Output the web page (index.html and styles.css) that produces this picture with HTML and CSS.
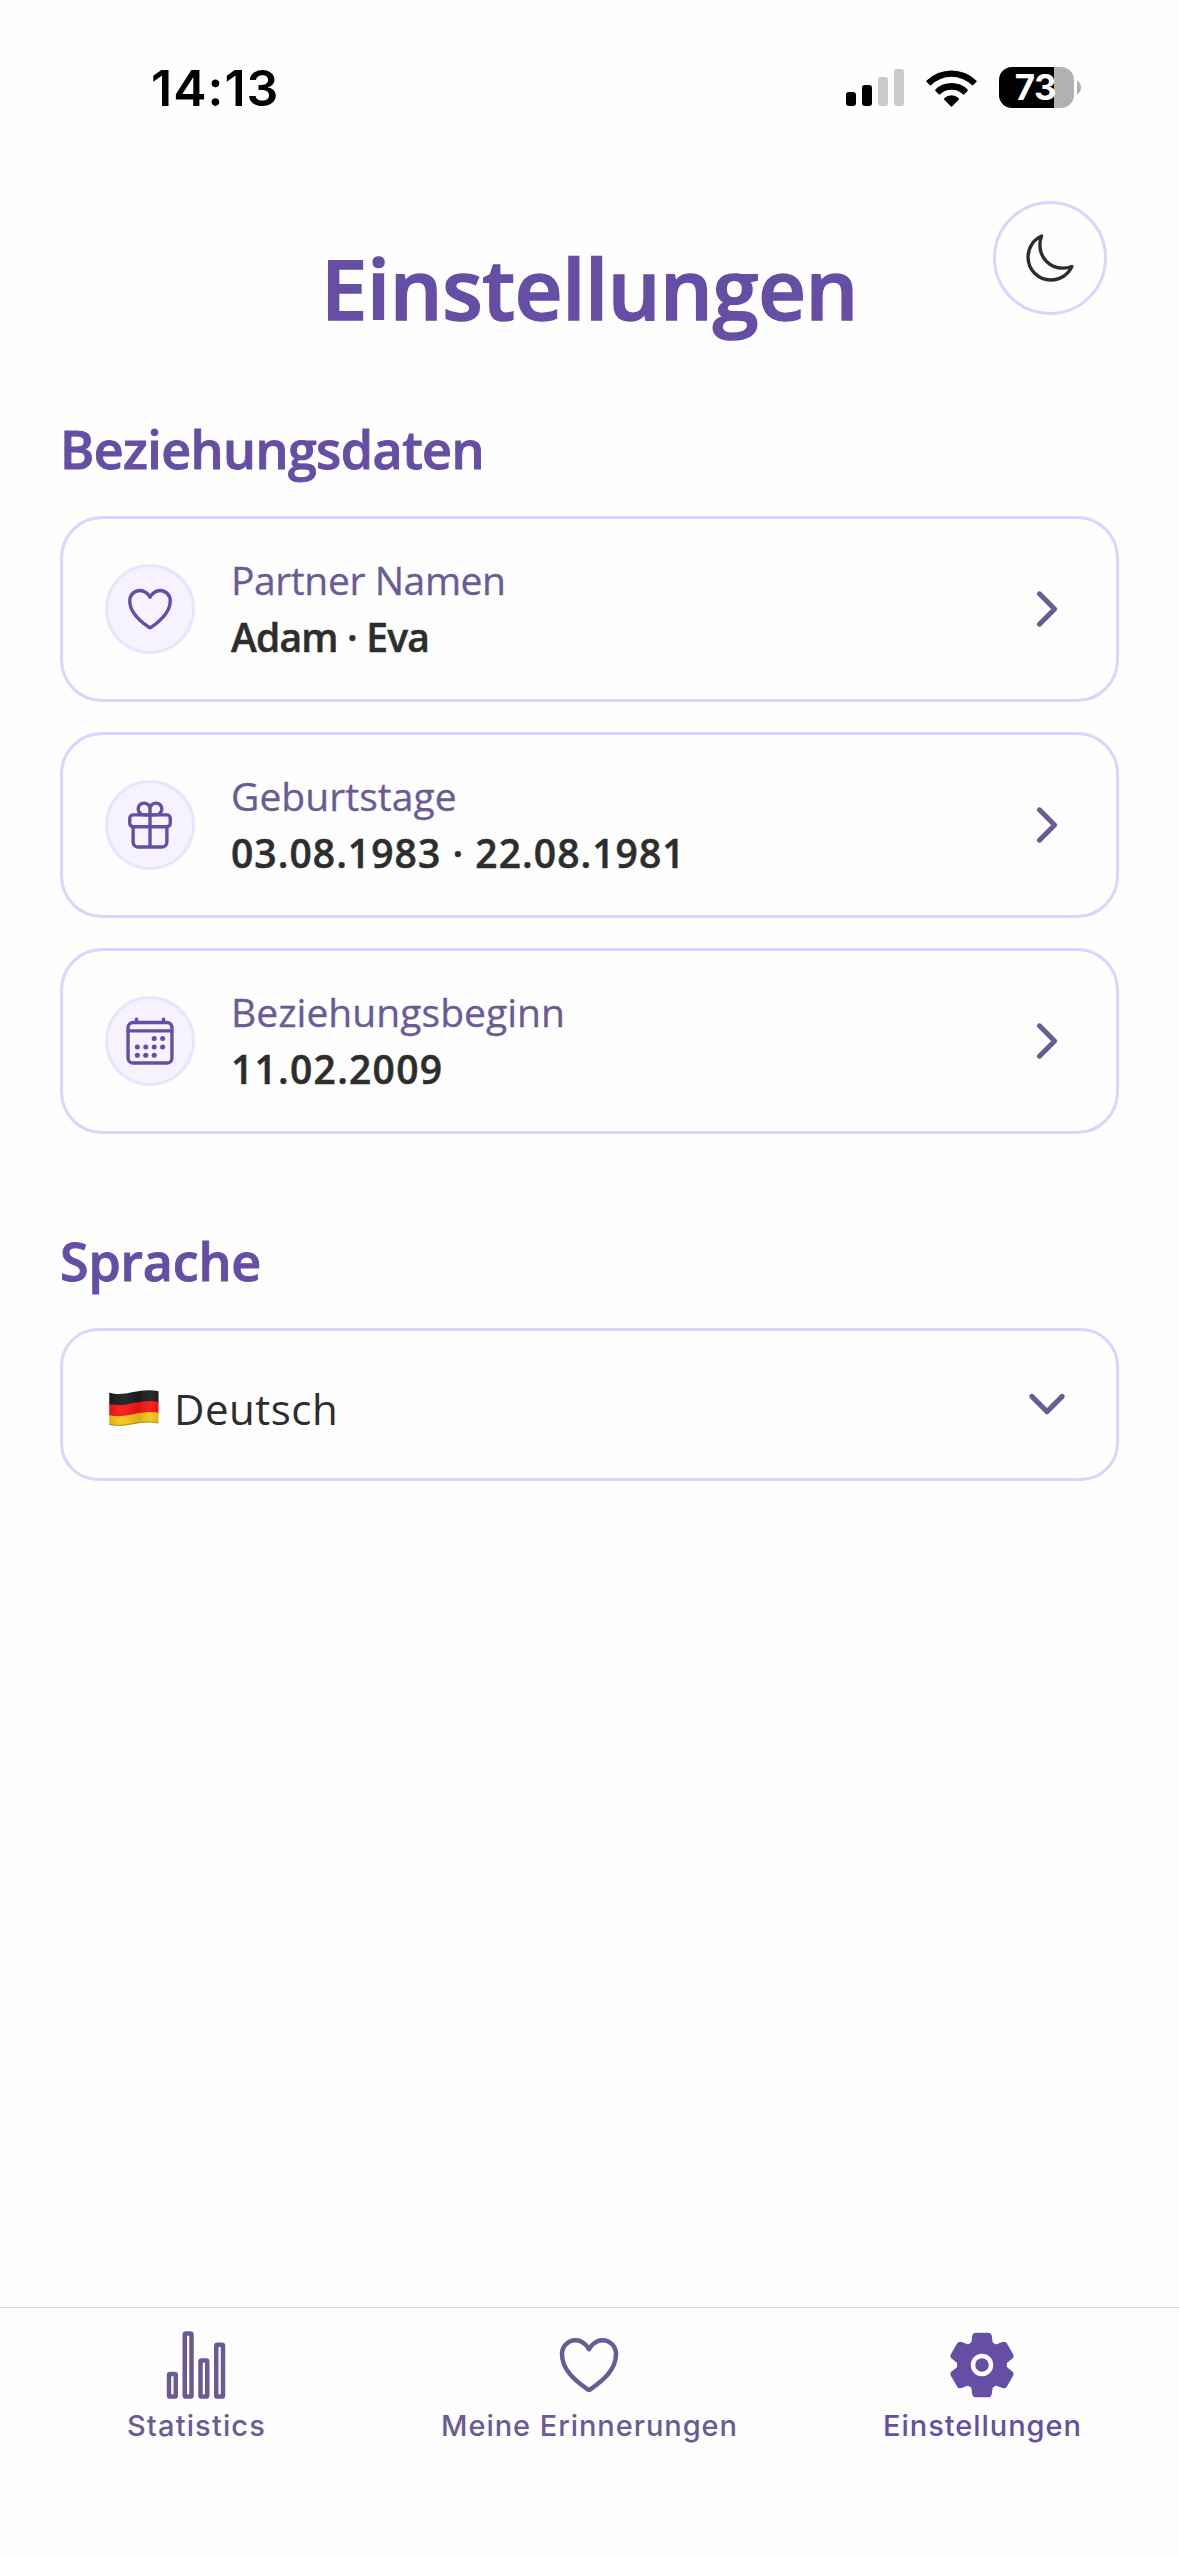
FILE: index.html
```html
<!DOCTYPE html>
<html lang="de">
<head>
<meta charset="utf-8">
<title>Einstellungen</title>
<link rel="stylesheet" href="styles.css">
</head>
<body>
<div class="status">
  <span class="time">14:13</span>
  <div class="indicators">
    <svg class="signal" width="58" height="37" viewBox="0 0 58 37">
      <rect x="0" y="23" width="10" height="14" rx="3"/>
      <rect x="16" y="16" width="10" height="21" rx="3"/>
      <rect x="32" y="8" width="10" height="29" rx="3" fill="#cbcbcb"/>
      <rect x="48" y="0" width="10" height="37" rx="3" fill="#cbcbcb"/>
    </svg>
    <svg class="wifi" width="51" height="38" viewBox="0 0 51 38">
      <path d="M.7 11.5a35.5 35.5 0 0 1 49.6 0q.8.8 0 1.6l-3 3q-.7.7-1.5 0a29 29 0 0 0-40.6 0q-.8.7-1.5 0l-3-3q-.8-.8 0-1.6z"/>
      <path d="M9.5 20.4a23 23 0 0 1 32 0q.8.8 0 1.6l-3.2 3.2q-.7.7-1.5 0a16.5 16.5 0 0 0-22.6 0q-.8.7-1.5 0l-3.2-3.2q-.8-.8 0-1.6z"/>
      <path d="M18.3 29.2a10.5 10.5 0 0 1 14.4 0q.8.8 0 1.6l-6.4 6.5q-.8.7-1.6 0l-6.4-6.5q-.8-.8 0-1.6z"/>
    </svg>
    <div class="battery"><span class="cell">73</span><span class="nub"></span></div>
  </div>
</div>

<header class="header">
  <h1 class="title">Einstellungen</h1>
  <button class="theme" aria-label="Dunkelmodus">
    <svg class="icon" viewBox="0 0 512 512"><path d="M160 136c0-30.62 4.51-61.61 16-88C99.57 81.27 48 159.32 48 248c0 119.29 96.71 216 216 216 88.68 0 166.73-51.57 200-128-26.39 11.49-57.38 16-88 16-119.29 0-216-96.71-216-216z"/></svg>
  </button>
</header>

<main class="main">
  <h2 class="heading">Beziehungsdaten</h2>
  <div class="cards">
    <div class="card">
      <span class="badge"><svg class="icon" viewBox="0 0 512 512"><path d="M352.92 80C288 80 256 144 256 144s-32-64-96.92-64c-52.76 0-94.54 44.14-95.08 96.81-1.1 109.33 86.73 187.08 183 252.42a16 16 0 0 0 18 0c96.26-65.34 184.09-143.09 183-252.42-.54-52.67-42.32-96.81-95.08-96.81z"/></svg></span>
      <div class="info"><span class="label">Partner Namen</span><span class="value names">Adam · Eva</span></div>
      <svg class="icon chevron" viewBox="0 0 512 512"><path d="M184 112l144 144-144 144"/></svg>
    </div>
    <div class="card">
      <span class="badge"><svg class="icon" viewBox="0 0 512 512"><path d="M256 104v56h56a56 56 0 1 0-56-56zM256 104v56h-56a56 56 0 1 1 56-56z"/><rect x="64" y="160" width="384" height="112" rx="32"/><path d="M416 272v144a48 48 0 0 1-48 48H144a48 48 0 0 1-48-48V272M256 160v304"/></svg></span>
      <div class="info"><span class="label wide">Geburtstage</span><span class="value dates">03.08.1983 · 22.08.1981</span></div>
      <svg class="icon chevron" viewBox="0 0 512 512"><path d="M184 112l144 144-144 144"/></svg>
    </div>
    <div class="card">
      <span class="badge"><svg class="icon" viewBox="0 0 512 512"><rect x="48" y="80" width="416" height="384" rx="48"/><path d="M128 48v32M384 48v32M464 160H48"/><g fill="currentColor" stroke="none"><circle cx="296" cy="232" r="24"/><circle cx="376" cy="232" r="24"/><circle cx="136" cy="312" r="24"/><circle cx="216" cy="312" r="24"/><circle cx="296" cy="312" r="24"/><circle cx="376" cy="312" r="24"/><circle cx="136" cy="392" r="24"/><circle cx="216" cy="392" r="24"/><circle cx="296" cy="392" r="24"/></g></svg></span>
      <div class="info"><span class="label wide">Beziehungsbeginn</span><span class="value date">11.02.2009</span></div>
      <svg class="icon chevron" viewBox="0 0 512 512"><path d="M184 112l144 144-144 144"/></svg>
    </div>
  </div>

  <h2 class="heading language">Sprache</h2>
  <div class="card select">
    <svg class="flag" width="50" height="36" viewBox="0 0 50 36">
      <defs>
        <linearGradient id="shade" x1="0" x2="1" y1="0" y2="0">
          <stop offset="0" stop-color="#000" stop-opacity=".12"/>
          <stop offset=".25" stop-color="#fff" stop-opacity=".06"/>
          <stop offset=".6" stop-color="#000" stop-opacity=".12"/>
          <stop offset=".85" stop-color="#fff" stop-opacity=".06"/>
          <stop offset="1" stop-color="#000" stop-opacity=".1"/>
        </linearGradient>
      </defs>
      <path fill="#1c1c1c" d="M.3 2.8C17 7.5 29-2.5 49.5 1.2V13L25 18 .3 15z"/>
      <path fill="#fa1414" d="M.3 14C17 18.3 29 8.3 49.5 11.6V24L25 29 .3 26z"/>
      <path fill="#f5c518" d="M.3 25C17 29.5 29 19.5 49.5 22.5V33.3C29 29.5 17 39 .3 34.8z"/>
      <path fill="url(#shade)" d="M.3 2.8C17 7.5 29-2.5 49.5 1.2V33.3C29 29.5 17 39 .3 34.8z"/>
      <path fill="none" stroke="#8b6a10" stroke-opacity=".6" d="M.5 34.4C17 38.5 29 29 49.3 32.9"/>
    </svg>
    <span class="choice">Deutsch</span>
    <svg class="icon chevron down" viewBox="0 0 512 512"><path d="M112 184l144 144 144-144"/></svg>
  </div>
</main>

<nav class="tabs">
  <a class="tab"><svg class="icon" viewBox="0 0 512 512"><rect x="64" y="320" width="48" height="160" rx="8"/><rect x="288" y="224" width="48" height="256" rx="8"/><rect x="400" y="112" width="48" height="368" rx="8"/><rect x="176" y="32" width="48" height="448" rx="8"/></svg><span class="stats">Statistics</span></a>
  <a class="tab"><svg class="icon" viewBox="0 0 512 512"><path d="M352.92 80C288 80 256 144 256 144s-32-64-96.92-64c-52.76 0-94.54 44.14-95.08 96.81-1.1 109.33 86.73 187.08 183 252.42a16 16 0 0 0 18 0c96.26-65.34 184.09-143.09 183-252.42-.54-52.67-42.32-96.81-95.08-96.81z"/></svg><span>Meine Erinnerungen</span></a>
  <a class="tab active"><svg class="icon solid" viewBox="0 0 512 512"><circle cx="256" cy="256" r="48"/><path d="M470.39,300l-.47-.38-31.56-24.75a16.11,16.11,0,0,1-6.1-13.33l0-11.56a16,16,0,0,1,6.11-13.22L469.92,212l.47-.38a26.68,26.68,0,0,0,5.9-34.06l-42.71-73.9a1.59,1.59,0,0,1-.13-.22A26.86,26.86,0,0,0,401,92.14l-.35.13L363.55,107.2a15.94,15.94,0,0,1-14.47-1.29q-4.92-3.1-10-5.86a15.94,15.94,0,0,1-8.19-11.82L325.3,48.64l-.12-.72A27.22,27.22,0,0,0,298.76,26H213.24a26.92,26.92,0,0,0-26.45,22.39l-.09.56-5.57,39.67A16,16,0,0,1,173,100.44c-3.42,1.84-6.76,3.79-10,5.82a15.92,15.92,0,0,1-14.43,1.27l-37.13-15-.35-.14a26.87,26.87,0,0,0-32.48,11.34l-.13.22L35.71,177.9A26.71,26.71,0,0,0,41.61,212l.47.38,31.56,24.75a16.11,16.11,0,0,1,6.1,13.33l0,11.56a16,16,0,0,1-6.11,13.22L42.08,300l-.47.38a26.68,26.68,0,0,0-5.9,34.06l42.71,73.9a1.59,1.59,0,0,1,.13.22A26.86,26.86,0,0,0,111,419.86l.35-.13,37.07-14.93a15.94,15.94,0,0,1,14.47,1.29q4.92,3.11,10,5.86a15.94,15.94,0,0,1,8.19,11.82l5.56,39.59.12.72A27.22,27.22,0,0,0,213.24,486h85.52a26.92,26.92,0,0,0,26.45-22.39l.09-.56,5.57-39.67a16,16,0,0,1,8.18-11.82c3.42-1.84,6.76-3.79,10-5.82a15.92,15.92,0,0,1,14.43-1.27l37.13,14.95.35.14a26.85,26.85,0,0,0,32.48-11.34,2.53,2.53,0,0,1,.13-.22l42.71-73.89A26.7,26.7,0,0,0,470.39,300ZM335.91,259.76a80,80,0,1,1-83.66-83.67A80.21,80.21,0,0,1,335.91,259.76Z"/></svg><span>Einstellungen</span></a>
</nav>
</body>
</html>
```
FILE: styles.css
```css
* { box-sizing: border-box; }

body {
  margin: 0;
  min-height: 2556px;
  display: flex;
  flex-direction: column;
  background: #fefefe;
  color: #2d2d2d;
  font-family: "Open Sans", sans-serif;
}

.status {
  height: 177px;
  padding: 57px 98px 0 151px;
  display: flex;
  justify-content: space-between;
  align-items: flex-start;
  color: #000;
  font-family: Inter, sans-serif;
}
.time {
  font-size: 50px;
  line-height: 62px;
  font-weight: 600;
  letter-spacing: 1px;
}
.indicators {
  display: flex;
  align-items: center;
  padding-top: 10px;
}
.signal { margin-right: 22px; }
.wifi { margin-right: 22px; }
.battery {
  display: flex;
  align-items: center;
  gap: 3px;
}
.cell {
  width: 75px;
  height: 41px;
  padding-right: 2px;
  border-radius: 13px;
  background: linear-gradient(90deg, #000 55px, #b1b1b1 55px);
  color: #fff;
  font-size: 35px;
  line-height: 41px;
  font-weight: 650;
  text-align: center;
  letter-spacing: -0.5px;
}
.nub {
  width: 4px;
  height: 13px;
  border-radius: 0 4px 4px 0 / 0 6.5px 6.5px 0;
  background: #b1b1b1;
}

.header {
  height: 242px;
  padding: 24px 72px 0;
  display: grid;
  grid-template-columns: 1fr auto 1fr;
  align-items: start;
}
.title {
  grid-column: 2;
  margin: 37px 0 0;
  font-size: 83px;
  line-height: 100px;
  font-weight: 600;
  letter-spacing: -0.35px;
  color: #654ea3;
  -webkit-text-stroke: 1.6px currentColor;
}
.theme {
  justify-self: end;
  width: 114px;
  height: 114px;
  padding: 0;
  display: grid;
  place-items: center;
  border: 3px solid #dcd3ff;
  border-radius: 50%;
  background: none;
  color: #2d2d2d;
}

.icon {
  width: 54px;
  height: 54px;
  flex: none;
  display: block;
  fill: none;
  stroke: currentColor;
  stroke-width: 32;
  stroke-linecap: round;
  stroke-linejoin: round;
}
.solid { fill: currentColor; stroke: none; }
.chevron { margin-left: auto; stroke-width: 48; color: #6b5b95; }
.down { margin-bottom: 2px; }

.main { padding: 0 60px; }
.heading {
  margin: 0 0 37px;
  font-size: 52px;
  line-height: 60px;
  font-weight: 600;
  letter-spacing: -0.6px;
  color: #654ea3;
  -webkit-text-stroke: 0.9px currentColor;
}
.language { margin-top: 97px; letter-spacing: -0.2px; }

.cards { display: grid; gap: 30px; }
.card {
  height: 186px;
  padding: 0 42px;
  display: flex;
  align-items: center;
  border: 3px solid #dcd3ff;
  border-radius: 42px;
}
.badge {
  width: 90px;
  height: 90px;
  margin-right: 36px;
  display: grid;
  place-items: center;
  border: 3px solid #ebe3ff;
  border-radius: 50%;
  background: #f6f2ff;
  color: #654ea3;
}
.info {
  display: flex;
  flex-direction: column;
  padding-bottom: 3px;
  font-size: 39px;
  line-height: 57px;
}
.label {
  color: #6b5b95;
  letter-spacing: -0.4px;
  -webkit-text-stroke: 0.3px currentColor;
}
.wide { letter-spacing: 0.05px; }
.value {
  font-weight: 600;
  -webkit-text-stroke: 0.5px currentColor;
}
.names { letter-spacing: -0.8px; }
.dates { letter-spacing: 1.05px; }
.date { letter-spacing: 1.25px; }

.select { height: 153px; padding-left: 46px; border-radius: 38px; }
.flag { margin: 7px 15px 0 0; }
.choice {
  padding-top: 7px;
  font-size: 42px;
  letter-spacing: 0.5px;
}

.tabs {
  height: 249px;
  margin-top: auto;
  padding-top: 21px;
  display: grid;
  grid-template-columns: repeat(3, 1fr);
  border-top: 1px solid #d8d0f8;
  font-family: Inter, sans-serif;
  font-size: 29px;
  line-height: 36px;
  font-weight: 500;
  letter-spacing: 0.95px;
  color: #6b5b95;
}
.tab {
  display: flex;
  flex-direction: column;
  align-items: center;
  gap: 7px;
}
.tab .icon { width: 72px; height: 72px; margin-right: 1px; }
.stats { letter-spacing: 1.15px; }
.active { color: #654ea3; }
```
